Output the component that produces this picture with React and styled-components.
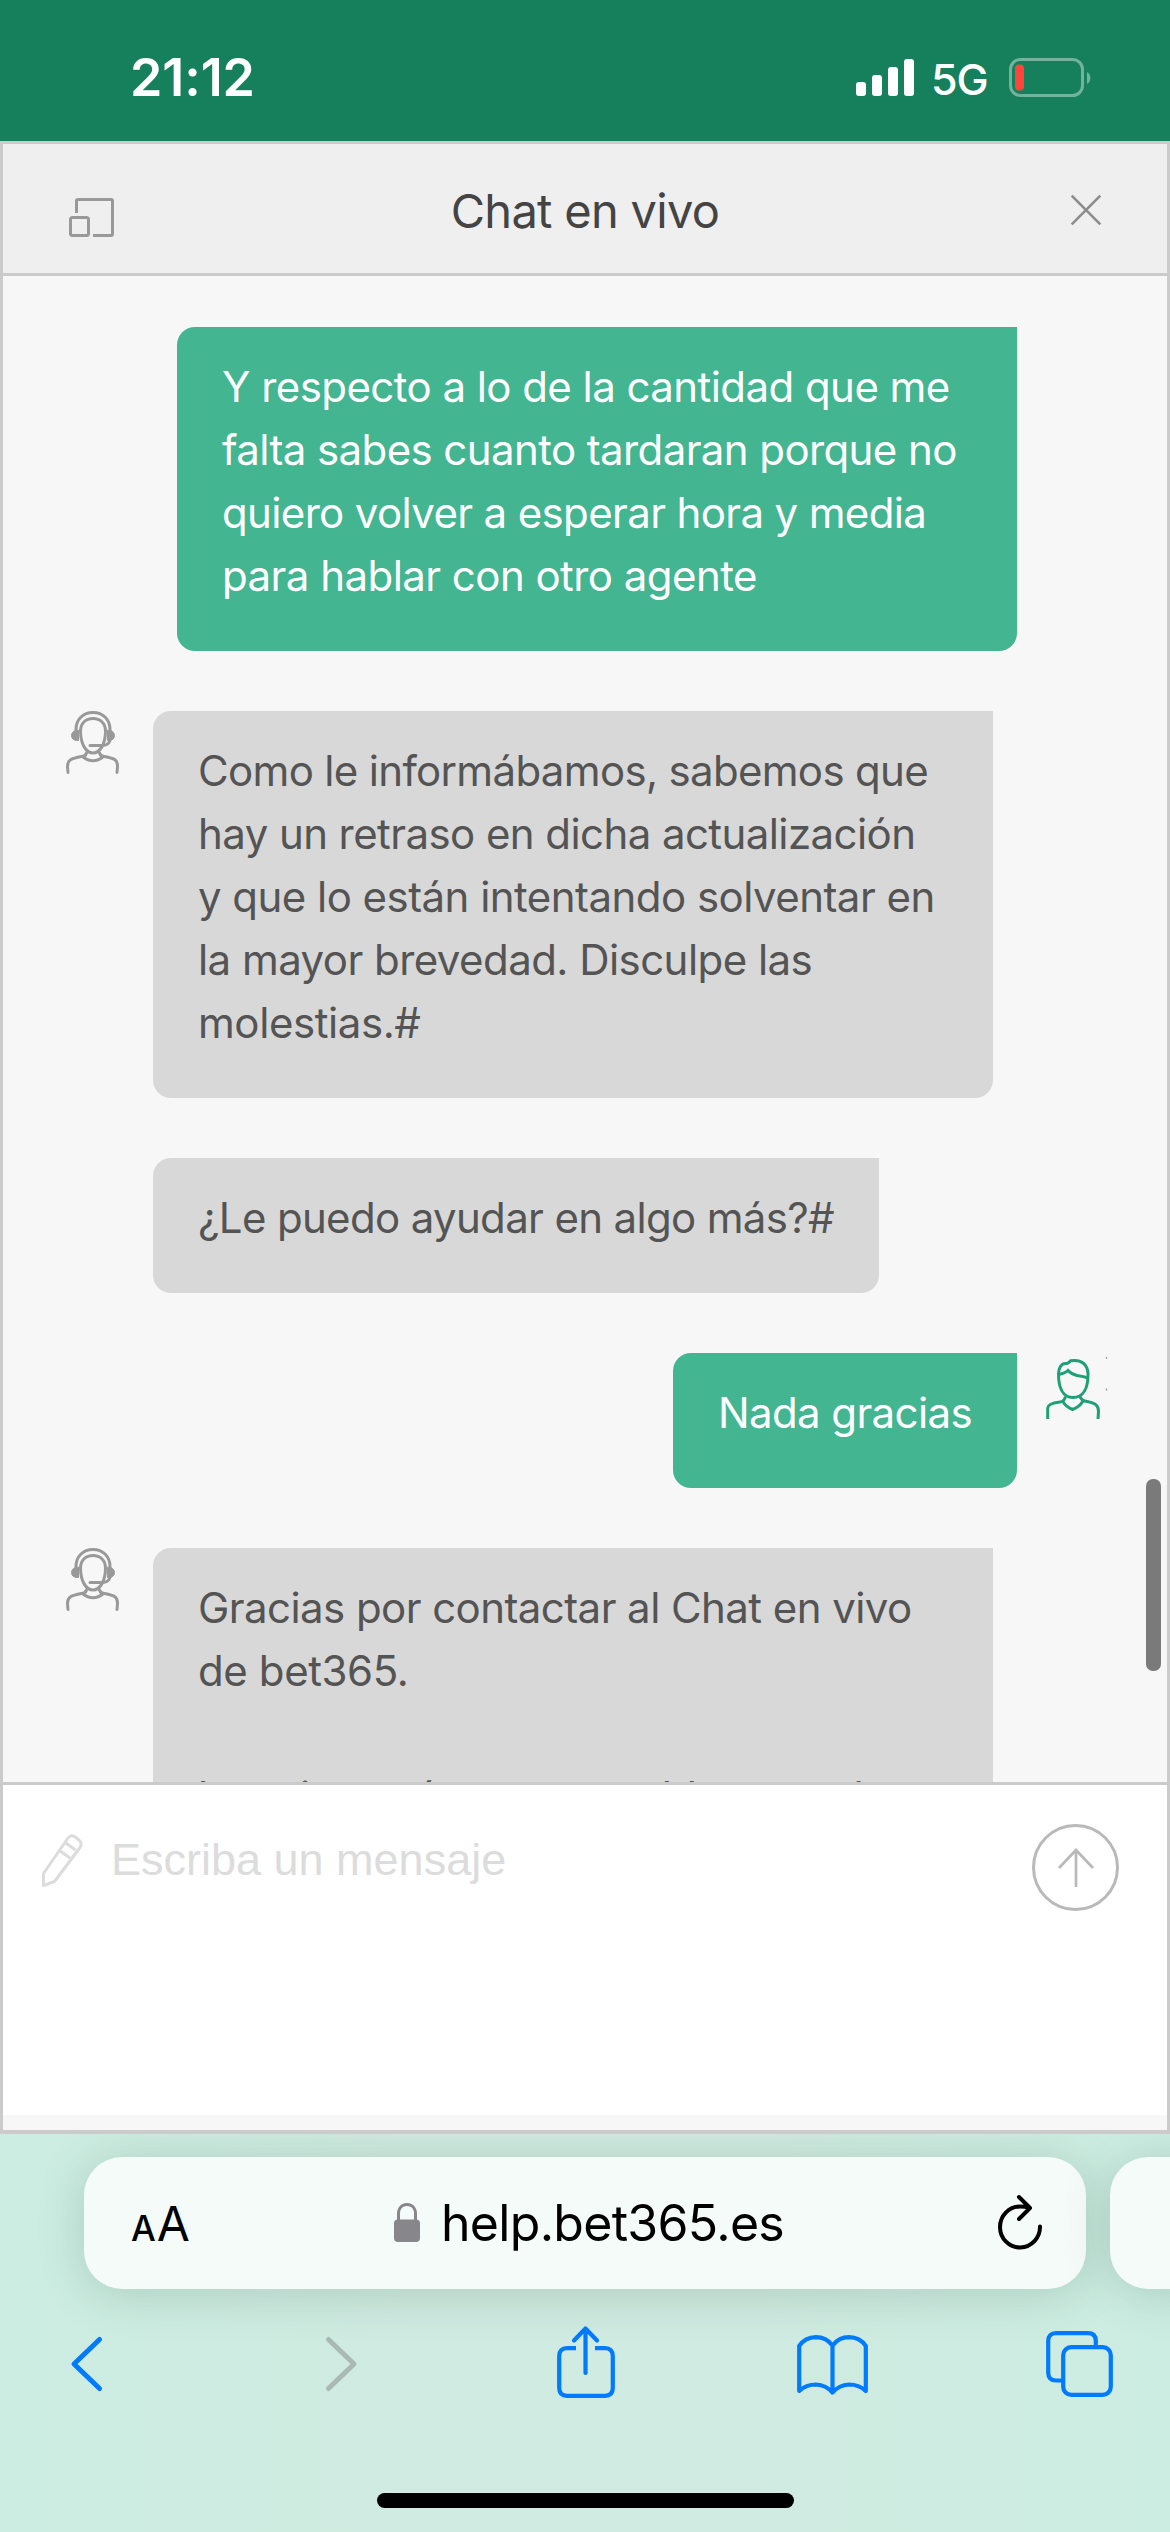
import React from "react";
import styled, { createGlobalStyle } from "styled-components";

const Global = createGlobalStyle`
  * { box-sizing: border-box; }
  body { margin: 0; background: #cdece2; }
  svg { display: block; flex: none; overflow: visible; }
`;

const Screen = styled.div`
  width: 1170px;
  height: 2532px;
  overflow: hidden;
  display: flex;
  flex-direction: column;
  font-family: Inter, "Liberation Sans", sans-serif;
`;

const StatusBar = styled.header`
  height: 141px;
  flex: none;
  background: #16805d;
  display: flex;
  justify-content: space-between;
  padding: 45px 79px 0 130px;
  color: #fff;
`;

const Clock = styled.div`
  font-size: 52px;
  line-height: 66px;
  font-weight: 600;
  letter-spacing: -0.1px;
`;

const Indicators = styled.div`
  display: flex;
  height: 66px;
`;

const Network = styled.div`
  font-size: 43px;
  line-height: 68px;
  font-weight: 450;
  margin: 0 0 0 17px;
  width: 78px;
  letter-spacing: -1px;
`;

const Panel = styled.main`
  height: 1993px;
  flex: none;
  border: 3px solid #cbcbcb;
  border-bottom-width: 4px;
  background: #f7f7f7;
  display: flex;
  flex-direction: column;
`;

const PanelHeader = styled.div`
  height: 132px;
  flex: none;
  border-bottom: 3px solid #cbcbcb;
  background: #efefef;
  display: flex;
  justify-content: space-between;
  align-items: flex-start;
  padding: 0 66px;
`;

const Title = styled.h1`
  margin: 36px 0 0;
  font-size: 47px;
  line-height: 62px;
  font-weight: 400;
  letter-spacing: -0.7px;
  color: #444;
`;

const IconSlot = styled.div`
  padding-top: ${(p) => p.$top}px;
  width: 45px;
  display: flex;
  justify-content: ${(p) => p.$align || "flex-start"};
`;

const Conversation = styled.section`
  height: 1506px;
  flex: none;
  overflow: hidden;
  display: flex;
`;

const Messages = styled.div`
  width: 1143px;
  padding: 51px 0 0 63px;
  display: flex;
  flex-direction: column;
  gap: 60px;
`;

const Row = styled.div`
  display: flex;
  flex: none;
  align-items: flex-start;
  justify-content: ${(p) => (p.$own ? "flex-end" : "flex-start")};
`;

const Avatar = styled.div`
  width: ${(p) => (p.$own ? 129 : 87)}px;
  flex: none;
  padding: ${(p) => (p.$own ? "6px 0 0 30px" : "0")};
`;

const Bubble = styled.div`
  width: ${(p) => p.$width}px;
  padding: 28px 0 44px 45px;
  border-radius: 18px 0 18px 18px;
  background: ${(p) => (p.$own ? "#43b591" : "#d8d8d8")};
  color: ${(p) => (p.$own ? "#fff" : "#545454")};
  font-size: 42px;
  line-height: 63px;
`;

const Line = styled.div`
  height: 63px;
  white-space: nowrap;
  letter-spacing: ${(p) => p.$tracking}px;
`;

const ScrollTrack = styled.div`
  padding-top: 1203px;
`;

const ScrollThumb = styled.div`
  width: 15px;
  height: 192px;
  border-radius: 7px;
  background: #7a7a7a;
`;

const Composer = styled.section`
  height: 333px;
  flex: none;
  border-top: 3px solid #cbcbcb;
  background: #fff;
  display: flex;
  padding-left: 36px;
`;

const Placeholder = styled.div`
  margin: 45px auto 0 25px;
  font-family: "Liberation Sans", sans-serif;
  font-size: 45px;
  line-height: 60px;
  color: #dcdcdc;
`;

const SendButton = styled.div`
  width: 87px;
  height: 87px;
  margin: 39px 48px 0 0;
  border: 3px solid #b9b9b9;
  border-radius: 50%;
  display: flex;
  align-items: center;
  justify-content: center;
`;

const Browser = styled.footer`
  flex: 1;
  background: linear-gradient(90deg, #ccede2 0%, #d0ebe1 35%, #d0ebe1 65%, #ccede2 100%);
  overflow: hidden;
  display: flex;
  flex-direction: column;
  align-items: center;
`;

const TabStrip = styled.div`
  width: 1170px;
  display: flex;
  gap: 24px;
  padding: 23px 0 0 84px;
`;

const Tab = styled.div`
  width: 1002px;
  height: 132px;
  flex: none;
  border-radius: 38px;
  background: #f5fbf9;
  box-shadow: 0 4px 48px rgba(40, 80, 60, 0.2);
  display: flex;
  color: #000;
`;

const TextSize = styled.div`
  width: 262px;
  margin-left: 47px;
  display: flex;
  align-items: baseline;
  gap: 1px;
  padding-top: 34px;
  font-size: 48px;
  line-height: 66px;
`;

const SmallA = styled.span`
  font-size: 35px;
  font-weight: 500;
`;

const LockSlot = styled.div`
  padding: 46px 21px 0 1px;
`;

const Address = styled.div`
  width: 557px;
  padding-top: 33px;
  font-size: 50px;
  line-height: 66px;
  letter-spacing: -0.7px;
`;

const ReloadSlot = styled.div`
  padding-top: 38px;
`;

const Toolbar = styled.nav`
  width: 1170px;
  height: 204px;
  flex: none;
  display: grid;
  grid-template-columns: 255px 231px 240px 249px 67px;
  align-items: start;
  padding: 37px 0 0 71px;
`;

const ToolSlot = styled.div`
  padding-top: ${(p) => p.$top}px;
`;

const HomeBar = styled.div`
  width: 417px;
  height: 15px;
  border-radius: 8px;
  background: #000;
`;

const SignalIcon = () => (
  <svg width="58" height="66" viewBox="0 0 58 66" fill="#fff">
    <rect x="0" y="37" width="10" height="14" rx="3" />
    <rect x="16" y="30" width="10" height="21" rx="3" />
    <rect x="32" y="22" width="10" height="29" rx="3" />
    <rect x="48" y="14" width="10" height="37" rx="3" />
  </svg>
);

const BatteryIcon = () => (
  <svg width="82" height="66" viewBox="0 0 82 66">
    <rect x="1.5" y="14.5" width="72" height="36" rx="10" fill="none" stroke="#73b39e" strokeWidth="3" />
    <path d="M78 27a7 7 0 0 1 0 12z" fill="#73b39e" />
    <rect x="6" y="19.5" width="9" height="26" rx="4" fill="#ff453a" />
  </svg>
);

const PopoutIcon = () => (
  <svg width="45" height="39" viewBox="0 0 45 39" fill="none" stroke="#999" strokeWidth="3">
    <path d="M7.5 15V3q0-1.500 1.500-1.500H42q1.500 0 1.500 1.500V36q0 1.500-1.500 1.500H24" />
    <rect x="1.500" y="19.500" width="18" height="18" rx="2" />
  </svg>
);

const CloseIcon = () => (
  <svg width="30" height="30" viewBox="0 0 30 30" fill="none" stroke="#8c8c8c" strokeWidth="2.600">
    <path d="M.7.7l28.600 28.600M29.300.7L.7 29.300" />
  </svg>
);

const AgentIcon = () => (
  <svg width="53" height="63" viewBox="0 0 53 63" fill="none" stroke="#999" strokeWidth="3" strokeLinecap="round">
    <path d="M10 21V18.500C10 8.500 17 1.500 27 1.500S44 8.500 44 18.500V21" />
    <path d="M14.500 20C14.500 12 20 7.500 27 7.500S39.500 12 39.500 20C39.500 33 34 42 27 42S14.500 33 14.500 20z" />
    <path d="M12.500 19.500v10H10.500A5 5 0 0 1 10.500 19.500zM41.500 19.500v10h2A5 5 0 0 0 43.500 19.500z" fill="#999" strokeWidth="1" />
    <path d="M24 34.500h13Q43 34 44 29" />
    <path d="M20.500 42Q19.500 45.500 15.500 45.500C5 47.500 1.500 49 1.500 55.500L2 61.500M33.500 42Q34.500 45.500 38.500 45.500C49 47.500 51.500 49 51.500 55.500L51 61.500M16.500 45.500Q27 54 37.500 45.500" />
  </svg>
);

const CustomerIcon = () => (
  <svg width="60" height="60" viewBox="0 0 60 60" fill="none" stroke="#1ea077" strokeWidth="3">
    <path d="M11.500 15C11.500 8.500 14.500 4.500 18.500 4.500Q21.500 5 23.500 1.800C34.500 0 41 5.500 41 15.500C41 29 36.500 38.500 26 38.500S11.500 28 11.500 15z" />
    <path d="M12 15.500Q18.500 14 21 11.500Q24 15 30 16.500Q37 17.500 41 19" />
    <path d="M18.500 37.500Q17.500 42.500 13 43C5 44 .7 45.500.7 49V60M33 37.500Q34.500 42 40 42.500C48 44 51.500 46 51.500 52.500L51 60M15.500 42Q19 48 25.500 50.500Q32.500 48 36 42" />
    <path d="M59.500-2v1.800M59.500 29.500v2" stroke="#999" strokeWidth="1.300" />
  </svg>
);

const PencilIcon = () => (
  <svg width="47" height="102" viewBox="0 0 47 102" fill="none" stroke="#dcdcdc" strokeWidth="3" strokeLinejoin="round">
    <path d="M4.500 100.500V88.500L29 53Q31.500 49.500 35.500 51.500L40.500 55.500Q43.500 58.500 41 62.500L15.500 96.500zM20.500 65.500l10.500 7.500M26 57.500l10.500 7.500" />
  </svg>
);

const ArrowUpIcon = () => (
  <svg width="36" height="39" viewBox="0 0 36 39" fill="none" stroke="#b9b9b9" strokeWidth="2.700">
    <path d="M18 39V2M1 20L18 2l17 18" />
  </svg>
);

const LockIcon = () => (
  <svg width="26" height="39" viewBox="0 0 26 39">
    <path d="M4.500 19V11C4.500 5 8 1.500 13 1.500S21.500 5 21.500 11V19" fill="none" stroke="#86868b" strokeWidth="3" />
    <rect y="16.500" width="26" height="22.500" rx="4" fill="#86868b" />
  </svg>
);

const ReloadIcon = () => (
  <svg width="44" height="54" viewBox="0 0 44 54" fill="none" stroke="#000" strokeWidth="4" strokeLinecap="round" strokeLinejoin="round">
    <path d="M42 31.500A20 20.500 0 1 1 22 11.500Q27 11.500 31 12.800M21 2L32 13L21 24" />
  </svg>
);

const ChevronIcon = ({ forward }) => (
  <svg width="31" height="54" viewBox="0 0 31 54" fill="none" stroke={forward ? "#a8bab3" : "#007aff"} strokeWidth="5" strokeLinecap="round" strokeLinejoin="round">
    <path d={forward ? "M2.500 2.500L28 27L2.500 51.500" : "M28.500 2.500L3 27L28.500 51.500"} />
  </svg>
);

const ShareIcon = () => (
  <svg width="58" height="72" viewBox="0 0 58 72" fill="none" stroke="#007aff" strokeWidth="4.200">
    <path d="M19 22.200H10Q2.200 22.200 2.200 30V62Q2.200 69.800 10 69.800H48Q55.800 69.800 55.800 62V30Q55.800 22.200 48 22.200H38" />
    <path d="M28.500 47V3M17 14.500L28.500 2.500L40 14.500" strokeLinecap="round" strokeLinejoin="round" />
  </svg>
);

const BookIcon = () => (
  <svg width="71" height="60" viewBox="0 0 71 60" fill="none" stroke="#007aff" strokeWidth="4.200" strokeLinecap="round" strokeLinejoin="round">
    <path d="M35.500 10.500Q29 2.200 19 2.200Q8 2.500 2.200 11V56Q9 49.500 19 49.500Q29 50 35.500 57.500Q42 50 52 49.500Q62 49.500 68.800 56V11Q63 2.500 52 2.200Q42 2.200 35.500 10.500V57" />
  </svg>
);

const TabsIcon = () => (
  <svg width="67" height="66" viewBox="0 0 67 66" fill="none" stroke="#007aff" strokeWidth="4.200">
    <path d="M16 49.500H10Q2.200 49.500 2.200 41.700V10Q2.200 2.200 10 2.200H42Q49.800 2.200 49.800 10V16" />
    <rect x="17.200" y="16.200" width="47.600" height="47.600" rx="8" />
  </svg>
);

const thread = [
  {
    own: true,
    width: 840,
    lines: [
      ["Y respecto a lo de la cantidad que me", -0.56],
      ["falta sabes cuanto tardaran porque no", -0.6],
      ["quiero volver a esperar hora y media", -0.64],
      ["para hablar con otro agente", -0.55],
    ],
  },
  {
    width: 840,
    avatar: true,
    lines: [
      ["Como le informábamos, sabemos que", -0.67],
      ["hay un retraso en dicha actualización", -0.58],
      ["y que lo están intentando solventar en", -0.54],
      ["la mayor brevedad. Disculpe las", -0.55],
      ["molestias.#", -0.42],
    ],
  },
  { width: 726, lines: [["¿Le puedo ayudar en algo más?#", -0.66]] },
  { own: true, width: 344, avatar: true, lines: [["Nada gracias", -0.62]] },
  {
    width: 840,
    avatar: true,
    lines: [
      ["Gracias por contactar al Chat en vivo", -0.57],
      ["de bet365.", -0.4],
      ["", 0],
      ["has visto más momento blog para los", -0.8],
    ],
  },
];

const Message = ({ own, width, avatar, lines }) => (
  <Row $own={own}>
    {!own && <Avatar>{avatar && <AgentIcon />}</Avatar>}
    <Bubble $own={own} $width={width}>
      {lines.map(([text, tracking], i) => (
        <Line key={i} $tracking={tracking}>
          {text}
        </Line>
      ))}
    </Bubble>
    {own && <Avatar $own>{avatar && <CustomerIcon />}</Avatar>}
  </Row>
);

export default function App() {
  return (
    <Screen>
      <Global />
      <StatusBar>
        <Clock>21:12</Clock>
        <Indicators>
          <SignalIcon />
          <Network>5G</Network>
          <BatteryIcon />
        </Indicators>
      </StatusBar>
      <Panel>
        <PanelHeader>
          <IconSlot $top={54}>
            <PopoutIcon />
          </IconSlot>
          <Title>Chat en vivo</Title>
          <IconSlot $top={51} $align="flex-end">
            <CloseIcon />
          </IconSlot>
        </PanelHeader>
        <Conversation>
          <Messages>
            {thread.map((m, i) => (
              <Message key={i} {...m} />
            ))}
          </Messages>
          <ScrollTrack>
            <ScrollThumb />
          </ScrollTrack>
        </Conversation>
        <Composer>
          <PencilIcon />
          <Placeholder>Escriba un mensaje</Placeholder>
          <SendButton>
            <ArrowUpIcon />
          </SendButton>
        </Composer>
      </Panel>
      <Browser>
        <TabStrip>
          <Tab>
            <TextSize>
              <SmallA>A</SmallA>
              <span>A</span>
            </TextSize>
            <LockSlot>
              <LockIcon />
            </LockSlot>
            <Address>help.bet365.es</Address>
            <ReloadSlot>
              <ReloadIcon />
            </ReloadSlot>
          </Tab>
          <Tab />
        </TabStrip>
        <Toolbar>
          <ToolSlot $top={11}>
            <ChevronIcon />
          </ToolSlot>
          <ToolSlot $top={11}>
            <ChevronIcon forward />
          </ToolSlot>
          <ToolSlot $top={0}>
            <ShareIcon />
          </ToolSlot>
          <ToolSlot $top={9}>
            <BookIcon />
          </ToolSlot>
          <ToolSlot $top={5}>
            <TabsIcon />
          </ToolSlot>
        </Toolbar>
        <HomeBar />
      </Browser>
    </Screen>
  );
}
